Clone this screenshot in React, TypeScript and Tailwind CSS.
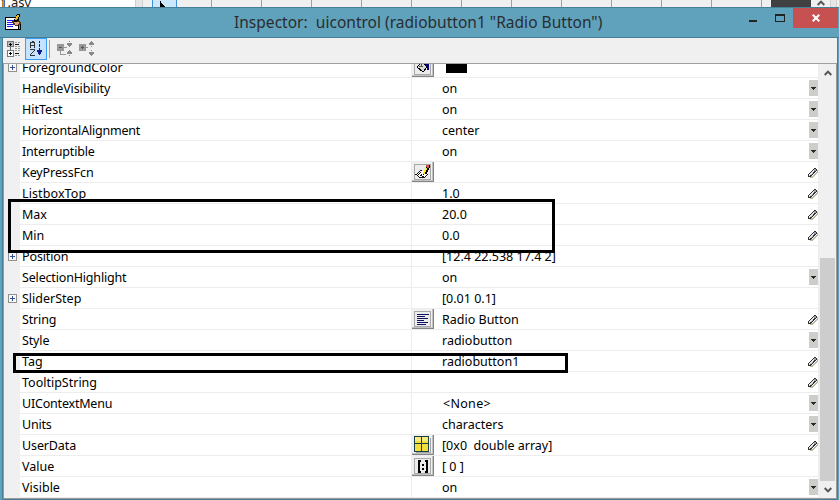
import type { ReactNode } from "react";

type Action = "menu" | "edit" | "none";
type Row = {
  name: string;
  value?: string;
  expand?: boolean;
  icon?: ReactNode;
  action: Action;
  tracking?: string;
};

const BucketIcon = () => (
  <svg width="14" height="14" viewBox="0 0 14 14" shapeRendering="crispEdges">
    <path d="M1 7 L6 2 L11 7 L7 12 Z" fill="#d8d8d8" stroke="#000" />
    <path d="M5 1v5M3 6h4" stroke="#555" />
    <path d="M8 2h3l2 3v5h-2V6L8 4z" fill="#000080" />
  </svg>
);
const PencilPageIcon = () => (
  <svg width="15" height="14" viewBox="0 0 15 14" shapeRendering="crispEdges">
    <path d="M1 9 L6 5 L13 9 L10 12 H3 Z" fill="#fff" />
    <path d="M0 9.500h2M2 8.500h1M3 7.500h1M4 6.500h1M5 5.500h2M2 10.500h1M3 11.500h1M4 12.500h6M10 11.500h1M11 10.500h1M12 9.500h1M3 9.500h1M4 8.500h1M5 7.500h1M5 10.500h2M6 9.500h1M7 11.500h2" stroke="#111" />
    <path d="M7.500 10V7h1V5h1V3h1V1h1V0h3v3h-1v2h-1v2h-1v2H9v1z" fill="#000" />
    <path d="M8 9V7h1V5h1V3h2v2h-1v2h-1v2z" fill="#ffe81c" />
    <path d="M11 0h3v3h-2V2h-1z" fill="#d2533f" />
  </svg>
);
const LinesIcon = () => (
  <svg width="14" height="13" viewBox="0 0 14 13" shapeRendering="crispEdges">
    <path d="M1 1.5h12M1 3.5h8M1 5.5h11M1 7.5h7M1 9.5h11M1 11.5h9" stroke="#101060" />
  </svg>
);
const GridIcon = () => (
  <svg width="17" height="17" viewBox="0 0 17 17" shapeRendering="crispEdges">
    <path d="M2 16.5h14.500V2" stroke="#a5a5a5" fill="none" />
    <path d="M.5 .5h14v15h-14z" fill="#f2df3b" stroke="#173f45" />
    <path d="M1 1h6v4H1zM8 1h6v4H8z" fill="#f8ea7c" />
    <path d="M7.5 0v16M0 7.5h15" stroke="#173f45" />
  </svg>
);
const MatrixIcon = () => (
  <svg width="14" height="13" viewBox="0 0 14 13" shapeRendering="crispEdges">
    <path d="M5 1H3v11h2M9 1h2v11H9" fill="none" stroke="#000" strokeWidth="2" />
    <path d="M6 4h2v2H6zM6 8h2v2H6z" fill="#000" />
  </svg>
);

const Pencil = () => (
  <svg width="10" height="10" viewBox="0 0 10 10" shapeRendering="crispEdges">
    <path d="M2 8h3v-1h1V6h1V5h1V4h1V2h1v3H9v1H8v1H7v1H6v1H5v1H2z" fill="#b9b8a0" />
    <path d="M0 6h1V5h1V4h1V3h1V2h1V1h1V0h2v1h1v2H8v1H7v1H6v1H5v1H4v1H3v1H0z" fill="#303030" />
    <path d="M1 6h1V5h1V4h1V3h1V2h1v2H5v1H4v1H3v1H2v1H1z" fill="#e8e8f2" />
    <path d="M6 1h2v2H6zM4 5h1v1H4zM3 6h1v1H3z" fill="#a0a0a4" />
  </svg>
);

const rows: Row[] = [
  { name: "ForegroundColor", expand: true, icon: <BucketIcon />, action: "none" },
  { name: "HandleVisibility", value: "on", action: "menu", tracking: "tracking-[-0.12px]" },
  { name: "HitTest", value: "on", action: "menu" },
  { name: "HorizontalAlignment", value: "center", action: "menu", tracking: "tracking-[-0.2px]" },
  { name: "Interruptible", value: "on", action: "menu", tracking: "tracking-[-0.18px]" },
  { name: "KeyPressFcn", icon: <PencilPageIcon />, action: "edit", tracking: "tracking-[-0.1px]" },
  { name: "ListboxTop", value: "1.0", action: "edit", tracking: "tracking-[0.1px]" },
  { name: "Max", value: "20.0", action: "edit" },
  { name: "Min", value: "0.0", action: "edit" },
  { name: "Position", value: "[12.4 22.538 17.4 2]", expand: true, action: "none", tracking: "tracking-[-0.12px]" },
  { name: "SelectionHighlight", value: "on", action: "menu", tracking: "tracking-[-0.17px]" },
  { name: "SliderStep", value: "[0.01 0.1]", expand: true, action: "none" },
  { name: "String", value: "Radio Button", icon: <LinesIcon />, action: "edit", tracking: "tracking-[-0.15px]" },
  { name: "Style", value: "radiobutton", action: "menu", tracking: "tracking-[-0.15px]" },
  { name: "Tag", value: "radiobutton1", action: "edit" },
  { name: "TooltipString", action: "edit" },
  { name: "UIContextMenu", value: "<None>", action: "menu", tracking: "tracking-[-0.2px]" },
  { name: "Units", value: "characters", action: "menu", tracking: "tracking-[-0.2px]" },
  { name: "UserData", value: "[0x0  double array]", icon: <GridIcon />, action: "edit", tracking: "tracking-[-0.12px]" },
  { name: "Value", value: "[ 0 ]", icon: <MatrixIcon />, action: "none" },
  { name: "Visible", value: "on", action: "menu" },
];

function PropertyRow({ row }: { row: Row }) {
  const flat = row.name === "UserData";
  return (
    <div className="flex h-[21px] shrink-0">
      <div className="flex w-4 shrink-0 justify-center pt-[6px]">
        {row.expand && (
          <svg width="9" height="9" viewBox="0 0 9 9" className="ml-px" shapeRendering="crispEdges">
            <path d="M.5 .5h8v8h-8z" fill="#f8f8f8" stroke="#919191" />
            <path d="M2 4.5h5M4.5 2v5" stroke="#34509a" />
          </svg>
        )}
      </div>
      <div className="flex w-[799px] shrink-0 border-r border-b border-[#ededed] bg-white">
        <div
          className={`w-[392px] shrink-0 border-r border-[#ededed] pl-[2px] leading-[22px] whitespace-pre ${row.tracking ?? ""}`}
        >
          {row.name}
        </div>
        <div className="w-[22px] shrink-0">
          {row.icon && (
            <div className="flex h-5 w-[22px] items-center justify-center border-r border-b border-[#858585] bg-[#f0f0f0] shadow-[inset_-1px_-1px_#c2c2c2]">
              {flat ? (
                row.icon
              ) : (
                <div className="mt-px flex h-4 w-[17px] items-center justify-center border border-[#a8a8a8] bg-[#ececec]">
                  {row.icon}
                </div>
              )}
            </div>
          )}
        </div>
        <div className="flex-1 pl-2 leading-[22px] whitespace-pre">
          {row.value === "<None>" ? <span className="ml-px tracking-[0.3px]">{row.value}</span> : row.value}
          {row.name === "ForegroundColor" && <div className="mt-[5px] ml-1 h-[11px] w-[21px] bg-black" />}
        </div>
        {row.action === "menu" && (
          <div className="mt-0.5 flex h-4 w-[9px] items-center justify-center bg-[#cecdca] pt-px">
            <svg width="5" height="3" viewBox="0 0 5 3" shapeRendering="crispEdges">
              <path d="M0 0h5v1H4v1H3v1H2V2H1V1H0z" fill="#292929" />
            </svg>
          </div>
        )}
        {row.action === "edit" && (
          <div className="mt-[6px] mr-px w-[9px]">
            <Pencil />
          </div>
        )}
      </div>
    </div>
  );
}

const Chevron = ({ down = false }: { down?: boolean }) => (
  <svg width="8" height="6" viewBox="0 0 8 6" className={down ? "rotate-180" : ""}>
    <path d="M.7 5 L4 1.6 L7.3 5" fill="none" stroke="#555" strokeWidth="2" />
  </svg>
);

function Background() {
  return (
    <div className="flex h-[7px] overflow-hidden bg-[#f0f0f0]">
      <div className="flex w-[135px] bg-white">
        <div className="h-[7px] w-[3px] border-r border-[#c87828]" />
        <span className="-mt-[6px] ml-[-3px] text-[13px] leading-4 text-[#222]">1.asv</span>
      </div>
      <div className="h-[7px] w-2 border-x border-[#cfcfcf] bg-[#e6e6e6]" />
      <div className="w-[9px]" />
      <div className="flex h-[7px] w-[25px] items-start border-x border-[#3c92da] bg-[#cce6fa]">
        <svg width="8" height="6" viewBox="0 0 8 6" className="mt-px ml-[6px]" shapeRendering="crispEdges">
          <path d="M1 0v6h5V5H5V4H4V3H3V2H2V0z" fill="#000" />
        </svg>
      </div>
      <div className="w-[34px]" />
      {Array.from({ length: 11 }, (_, i) => (
        <div key={i} className="h-[7px] w-[50px] border-l border-[#a0a0a0]" />
      ))}
      <div className="h-[7px] w-[10px] border-l border-[#a0a0a0]" />
      <div className="w-10 bg-[#404040]" />
      <div className="flex w-[19px] justify-center">
        <Chevron />
      </div>
      <div className="h-[7px] w-[7px] border-x border-[#d0d0d0] bg-[#e6e6e6]" />
    </div>
  );
}

function TitleBar() {
  return (
    <div className="flex h-[31px] shrink-0 border-y border-[#477f96] bg-[#60a2bc]">
      <svg width="17" height="17" viewBox="0 0 17 17" className="mt-[6px] ml-[5px] shrink-0" shapeRendering="crispEdges">
        <path d="M.5 3.500h13v12h-13z" fill="#fff" stroke="#000" />
        <path d="M1 15.500h14V9" fill="none" stroke="#000" />
        <path d="M2 6.5h6M2 8.5h5M2 10.5h7M2 12.5h6" stroke="#1818f0" />
        <path d="M8 6h5v1h2v1h1v2h-1v1h-2v1h-3v-1H8V9H7V7h1z" fill="#5a3620" />
        <path d="M9 7h3v1h2v2h-1v1h-3V9H9z" fill="#dcab88" />
        <path d="M9 7V5h1V3h1V1h1V0h3v3h-1v2h-1v2h-1v1H9z" fill="#000" />
        <path d="M10 6V4h1V2h1V1h2v2h-1v2h-1v1z" fill="#e9bd28" />
      </svg>
      <div className="ml-[212px] w-[400px] shrink-0 text-[15.5px] leading-[29px] tracking-[0.02px] whitespace-pre text-[#292d30]">
        {'Inspector:  uicontrol (radiobutton1 "Radio Button")'}
      </div>
      <div className="flex-1" />
      <div className="mt-3 mr-[18px] h-[2px] w-2 shrink-0 bg-[#222]" />
      <div className="mt-[6px] mr-2 h-2 w-[10px] shrink-0 border border-t-2 border-[#222]" />
      <div className="mr-px flex h-5 w-[45px] shrink-0 items-center justify-center bg-[#c75050]">
        <svg width="8" height="8" viewBox="0 0 8 8">
          <path d="M.7 .7l6.6 6.6M7.3 .7L.7 7.3" stroke="#fff" strokeWidth="2" />
        </svg>
      </div>
    </div>
  );
}

function Toolbar() {
  return (
    <div className="flex h-[26px] shrink-0 border-b border-[#a0a0a0] bg-[#f0f0f0] pl-1">
      <svg width="15" height="16" viewBox="0 0 15 16" className="mt-[3px]" shapeRendering="crispEdges">
        <path d="M.5 .5h6v5h-6z" fill="#bbb" stroke="#777" />
        <path d="M2 3.500h3M3.5 2v3" stroke="#000" />
        <path d="M3.5 6v3" stroke="#666" />
        <path d="M.5 9.5h6v6h-6z" fill="#fff" stroke="#777" />
        <path d="M2 12.5h3M3.5 11v3" stroke="#000" />
        <path d="M8 3.5h4M8 12.5h4" stroke="#111" />
        <path d="M8 1.500h6M8 5.5h6M8 7.5h6M8 9.5h6M8 14.5h6" stroke="#999" strokeDasharray="2 1" />
      </svg>
      <div className="ml-[3px] h-[22px] w-[22px] border border-[#3c9bf5] bg-[#c5e2ff]">
        <svg width="20" height="20" viewBox="0 0 20 20" shapeRendering="crispEdges">
          <path d="M6 2h2v1h1v6H8V7H5v2H4V3h2zM5 4v2h3V4zM4 10h5v2H8v1H7v1H6v1H5v1h4v1H4v-2h1v-1h1v-1h1v-1h1v-1H4z" fill="#333" />
          <path d="M13.5 2v2M13.5 5v3M13.5 9v3" stroke="#202060" />
          <path d="M11 11h5v2h-1v2h-1v1h-1v-1h-1v-2h-1z" fill="#171783" />
        </svg>
      </div>
      <div className="mt-[2px] ml-[2px] h-[18px] w-px bg-[#a0a0a0]" />
      <svg width="16" height="16" viewBox="0 0 16 16" className="mt-[3px] ml-[7px]" shapeRendering="crispEdges">
        <path d="M0 3h7v7H0z" fill="#989898" />
        <path d="M2 6.5h3" stroke="#555" />
        <path d="M7 6.5h3M3.5 10v3.500h5" fill="none" stroke="#999" />
        <path d="M10 2h5v2h-1v1h-1v1h-1V5h-1V4h-1zM10 13h5v-2h-1v-1h-1V9h-1v1h-1v1h-1z" fill="#888" />
        <path d="M12.500 0v1M12.500 14v1" stroke="#888" />
      </svg>
      <svg width="16" height="16" viewBox="0 0 16 16" className="mt-[3px] ml-[6px]" shapeRendering="crispEdges">
        <path d="M0 3h7v7H0z" fill="#989898" />
        <path d="M2 6.500h3M3.500 5v3" stroke="#555" />
        <path d="M7 6.500h2" stroke="#999" />
        <path d="M10 4h5V2h-1V1h-1V0h-1v1h-1v1h-1zM10 11h5v2h-1v1h-1v1h-1v-1h-1v-1h-1z" fill="#888" />
        <path d="M12.500 5v1M12.500 9v1" stroke="#888" />
      </svg>
    </div>
  );
}

export default function App() {
  return (
    <div className="relative h-[500px] w-[839px] overflow-hidden bg-[#60a2bc] font-['Noto_Sans',sans-serif] text-[12.5px] text-black">
      <Background />
      <TitleBar />
      <div className="mr-px ml-[2px] flex h-[462px] flex-col border-x border-b border-[#477f96]">
        <Toolbar />
        <div className="flex min-h-0 flex-1 overflow-hidden border-x border-b border-[#999] bg-[#f0f0f0]">
          <div className="-mt-[7px] flex w-[815px] shrink-0 flex-col">
            {rows.map((row) => (
              <PropertyRow key={row.name} row={row} />
            ))}
          </div>
          <div className="ml-px flex w-[15px] shrink-0 flex-col items-center bg-[#f0f0f0]">
            <div className="pt-[6px]">
              <Chevron />
            </div>
            <div className="mt-auto h-[223px] w-[15px] shrink-0 bg-[#cdcdcd]" />
            <div className="flex h-[17px] items-center">
              <Chevron down />
            </div>
          </div>
        </div>
      </div>
      <div className="absolute top-[199px] left-2 h-[54px] w-[547px] border-3 border-black" />
      <div className="absolute top-[353px] left-[13px] h-5 w-[555px] border-3 border-black" />
    </div>
  );
}
